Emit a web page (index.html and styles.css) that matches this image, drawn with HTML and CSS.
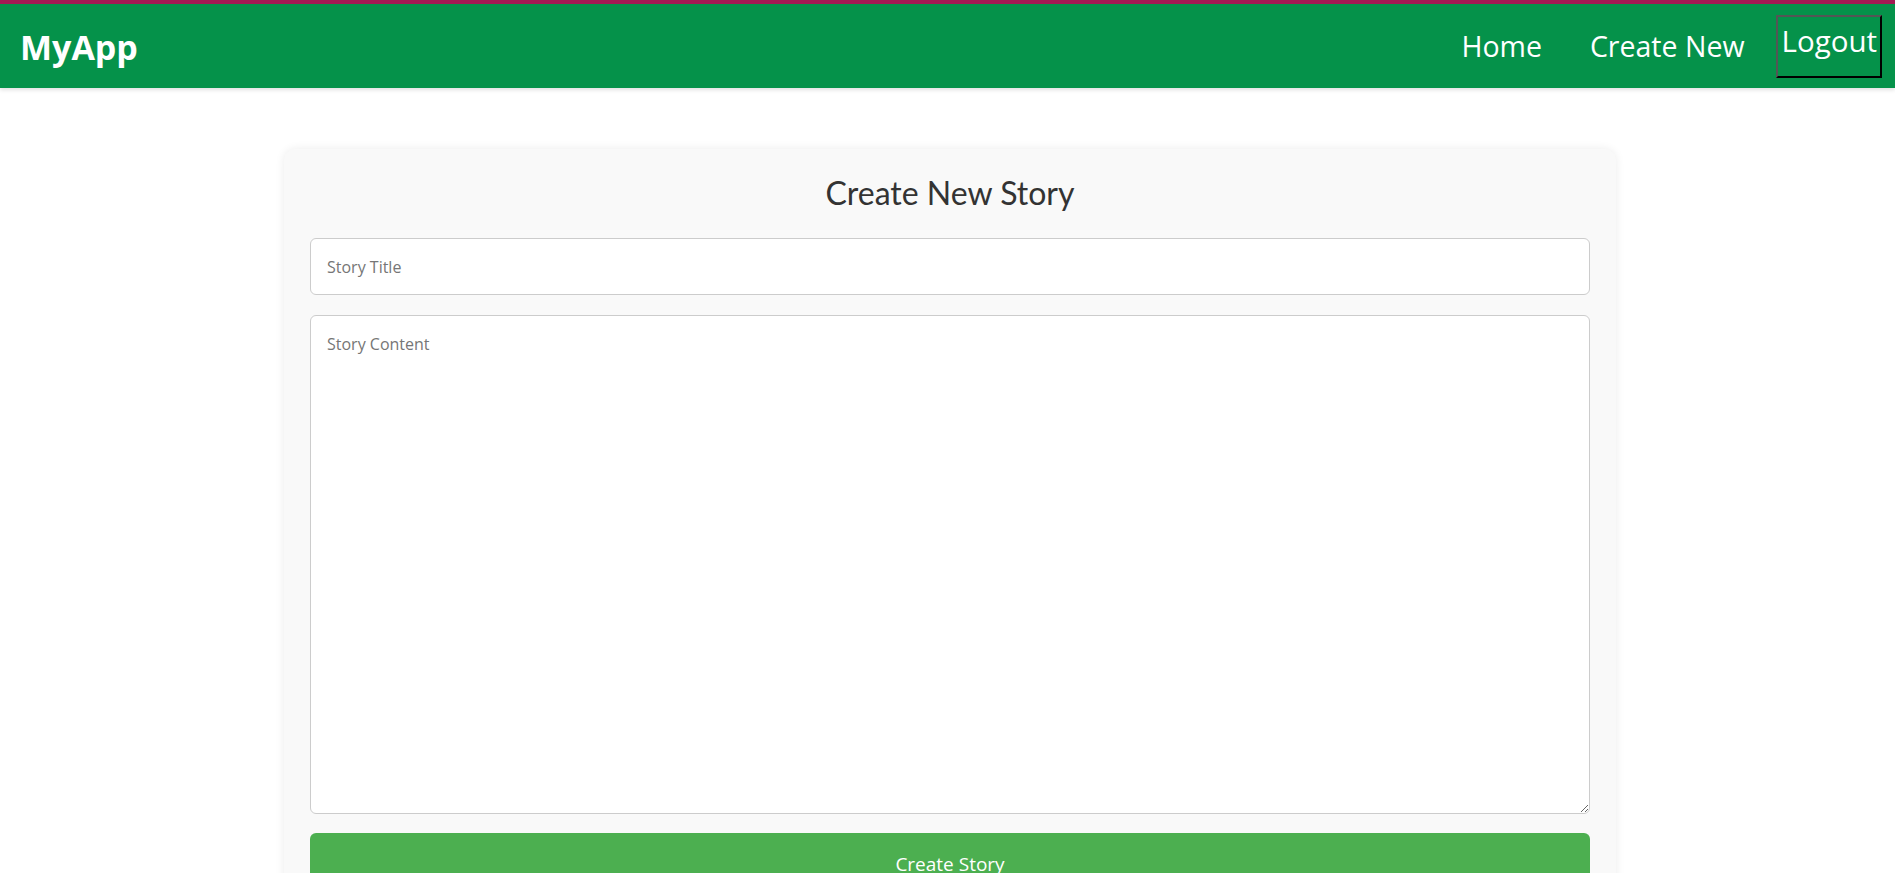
FILE: index.html
```html
<!DOCTYPE html>
<html lang="en">
<head>
<meta charset="utf-8">
<title>MyApp - Create New Story</title>
<link rel="stylesheet" href="styles.css">
</head>
<body>
<header class="topbar">
  <div class="logo">MyApp</div>
  <nav class="nav">
    <a class="nav-link" href="#">Home</a>
    <a class="nav-link nav-link-last" href="#">Create New</a>
    <button class="logout" type="button">Logout</button>
  </nav>
</header>
<main class="page">
  <section class="card">
    <h1 class="card-title">Create New Story</h1>
    <form class="story-form">
      <input class="field field-title" type="text" placeholder="Story Title">
      <textarea class="field field-content" placeholder="Story Content"></textarea>
      <button class="submit" type="submit">Create Story</button>
    </form>
  </section>
</main>
</body>
</html>
```

FILE: styles.css
```css
* {
  box-sizing: border-box;
}

html, body {
  margin: 0;
  padding: 0;
  background: #ffffff;
}

body {
  font-family: "Open Sans", "Noto Sans", Arial, sans-serif;
  color: #333333;
  overflow: hidden;
}

.topbar {
  display: flex;
  align-items: center;
  justify-content: space-between;
  height: 88px;
  border-top: 4px solid #a31a53;
  background: #05924a;
  padding: 0 13px 0 20px;
  box-shadow: 0 2px 4px rgba(0, 0, 0, 0.12);
  position: relative;
  z-index: 1;
}

.logo {
  font-family: "Open Sans", Arial, sans-serif;
  font-weight: 700;
  font-size: 34px;
  line-height: 1;
  color: #ffffff;
  padding-top: 1px;
}

.nav {
  display: flex;
  align-items: center;
}

.nav-link {
  font-size: 28.5px;
  line-height: 1;
  color: #ffffff;
  text-decoration: none;
  margin-right: 48px;
}

.nav-link-last {
  margin-right: 32px;
}

.logout {
  font-family: "Open Sans", Arial, sans-serif;
  font-size: 29.5px;
  line-height: 1;
  color: #ffffff;
  background: transparent;
  height: 63px;
  padding: 9px 3px 21px;
  border-width: 2px;
  border-style: solid;
  border-color: #555555 #000000 #000000 #555555;
  cursor: pointer;
}

.page {
  padding: 61px 0 0 5px;
}

.card {
  width: 1332px;
  margin: 0 auto;
  background: #f9f9f9;
  border-radius: 12px;
  padding: 25px 26px;
  box-shadow: 0 0 10px rgba(0, 0, 0, 0.08);
}

.card-title {
  font-family: Lato, "Open Sans", sans-serif;
  font-weight: 400;
  font-size: 32px;
  line-height: 1.2;
  color: #333333;
  text-align: center;
  margin: 0 0 26px;
}

.story-form {
  display: flex;
  flex-direction: column;
}

.field {
  display: block;
  width: 100%;
  font-family: "Open Sans", Arial, sans-serif;
  font-size: 16px;
  color: #333333;
  background: #ffffff;
  border: 1px solid #cccccc;
  border-radius: 6px;
  padding: 0 16px;
  outline: none;
}

.field::placeholder {
  color: #767676;
}

.field-title {
  height: 57px;
}

.field-content {
  height: 499px;
  margin-top: 20px;
  padding: 16px;
  line-height: 1.6;
  resize: vertical;
}

.submit {
  margin-top: 19px;
  width: 100%;
  font-family: "Open Sans", Arial, sans-serif;
  font-size: 19px;
  line-height: normal;
  color: #ffffff;
  background: #4caf50;
  border: none;
  border-radius: 6px;
  padding: 18px 0 14px;
  cursor: pointer;
}
```
